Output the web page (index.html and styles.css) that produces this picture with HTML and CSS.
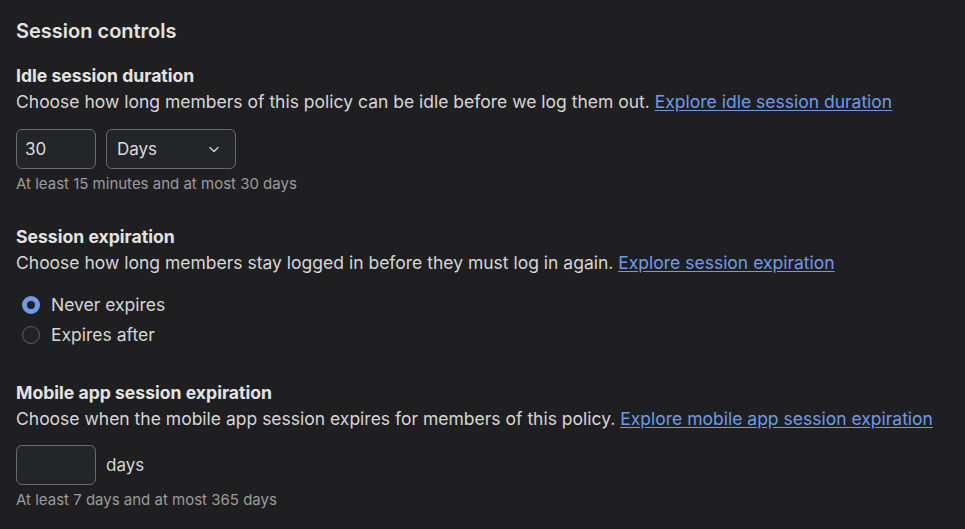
FILE: index.html
```html
<!DOCTYPE html>
<html lang="en">
<head>
<meta charset="utf-8">
<title>Session controls</title>
<link rel="stylesheet" href="styles.css">
</head>
<body>
<main class="page">
  <h1 class="page-title">Session controls</h1>

  <section class="setting">
    <h2 class="setting-title">Idle session duration</h2>
    <p class="setting-desc">Choose how long members of this policy can be idle before we log them out. <a href="#" class="link">Explore idle session duration</a></p>
    <div class="field-row">
      <div class="input">30</div>
      <div class="select">
        <span>Days</span>
        <svg class="chev" width="14" height="14" viewBox="0 0 14 14" fill="none"><path d="M3 5.5l4 4 4-4" stroke="#cfcfcf" stroke-width="1.4" stroke-linecap="round" stroke-linejoin="round"/></svg>
      </div>
    </div>
    <p class="hint">At least 15 minutes and at most 30 days</p>
  </section>

  <section class="setting">
    <h2 class="setting-title">Session expiration</h2>
    <p class="setting-desc">Choose how long members stay logged in before they must log in again. <a href="#" class="link">Explore session expiration</a></p>
    <div class="radios">
      <label class="radio"><span class="dot checked"></span>Never expires</label>
      <label class="radio"><span class="dot"></span>Expires after</label>
    </div>
  </section>

  <section class="setting">
    <h2 class="setting-title">Mobile app session expiration</h2>
    <p class="setting-desc">Choose when the mobile app session expires for members of this policy. <a href="#" class="link">Explore mobile app session expiration</a></p>
    <div class="field-row field-row-tight">
      <div class="input"></div>
      <span class="unit">days</span>
    </div>
    <p class="hint">At least 7 days and at most 365 days</p>
  </section>
</main>
</body>
</html>
```

FILE: styles.css
```css
html, body {
  margin: 0;
  padding: 0;
  background: #1f1f21;
}
body {
  font-family: Inter, "Noto Sans", sans-serif;
  color: #d6d6d6;
}
.page {
  padding: 19px 16px 0 16px;
}
.page-title {
  margin: 0 0 20px 0;
  font-size: 20px;
  line-height: 24px;
  font-weight: 600;
  color: #e3e3e3;
}
.setting {
  margin-bottom: 30px;
}
.setting-title {
  margin: 0;
  font-size: 17.6px;
  line-height: 25px;
  font-weight: 700;
  color: #e3e3e3;
}
.setting-desc {
  margin: 1px 0 0 0;
  font-size: 17.5px;
  line-height: 25px;
  color: #d6d6d6;
}
.link {
  color: #6c9ce9;
  text-decoration: underline;
  text-underline-offset: 2px;
}
.field-row {
  display: flex;
  align-items: center;
  gap: 10px;
  margin-top: 15px;
}
.field-row-tight {
  margin-top: 14px;
}
.input, .select {
  box-sizing: border-box;
  height: 40px;
  border: 1px solid #6a6a6e;
  border-radius: 6px;
  background: #242529;
  font-size: 17px;
  color: #dcdcdc;
  display: flex;
  align-items: center;
}
.input {
  width: 80px;
  padding-left: 8px;
}
.select {
  width: 130px;
  padding: 0 14px 0 10px;
  justify-content: space-between;
}
.chev {
  display: block;
}
.unit {
  font-size: 17px;
  color: #d6d6d6;
}
.hint {
  margin: 5px 0 0 0;
  font-size: 15px;
  line-height: 20px;
  color: #9b9b9b;
}
.radios {
  margin: 18px 0 33px 0;
  display: flex;
  flex-direction: column;
  gap: 6px;
  padding-left: 6px;
}
.radio {
  display: flex;
  align-items: center;
  gap: 11px;
  font-size: 17.5px;
  line-height: 24px;
  color: #d6d6d6;
}
.dot {
  box-sizing: border-box;
  width: 18px;
  height: 18px;
  border-radius: 50%;
  border: 1px solid #5e5e62;
  background: #222327;
}
.dot.checked {
  border: 5px solid #6c9ce9;
  background: #1f1f21;
}
```
